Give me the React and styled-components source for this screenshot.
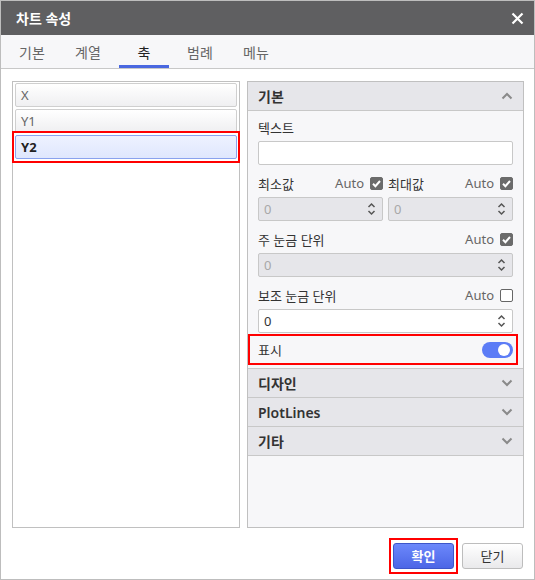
import styled, { createGlobalStyle, css } from "styled-components";

const GlobalStyle = createGlobalStyle`
  * { box-sizing: border-box; }
  body {
    margin: 0;
    background: #fff;
    font-family: "Noto Sans", "Noto Sans CJK KR", sans-serif;
  }
`;

const tabs = ["기본", "계열", "축", "범례", "메뉴"];
const axes = ["X", "Y1", "Y2"];
const sections = ["디자인", "PlotLines", "기타"];

// red annotation frame drawn over an element
const redFrame = (x, y) => css`
  position: relative;
  &::before {
    content: "";
    position: absolute;
    left: -${x}px;
    right: -${x}px;
    top: -${y}px;
    bottom: -${y}px;
    border: 2px solid #f00;
    pointer-events: none;
  }
`;

const Chevron = ({ up }) => (
  <svg width="12" height="8" viewBox="0 0 12 8">
    <path
      d={up ? "M1.5 6.5 L6 2 L10.5 6.5" : "M1.5 1.5 L6 6 L10.5 1.5"}
      fill="none"
      stroke="#8a8a8a"
      strokeWidth="2"
    />
  </svg>
);

const Spinner = () => (
  <svg width="9" height="16" viewBox="0 0 9 16">
    <path d="M1.5 6 L4.5 3 L7.5 6 M1.5 10 L4.5 13 L7.5 10" fill="none" stroke="#555" strokeWidth="1.5" />
  </svg>
);

const Check = ({ checked }) => (
  <Box checked={checked}>
    {checked && (
      <svg width="11" height="11" viewBox="0 0 11 11">
        <path d="M2 5.8 L4.4 8.2 L9 3" fill="none" stroke="#fff" strokeWidth="2" />
      </svg>
    )}
  </Box>
);

const AutoCheck = ({ checked }) => (
  <Auto>
    Auto <Check checked={checked} />
  </Auto>
);

const NumberInput = ({ disabled }) => (
  <Input disabled={disabled}>
    <span>0</span>
    <Spinner />
  </Input>
);

const App = () => {
  return (
    <>
      <GlobalStyle />
      <Dialog>
        <TitleBar>
          <h1>차트 속성</h1>
          <svg width="13" height="13" viewBox="0 0 13 13">
            <path d="M1.5 1.5 L11.5 11.5 M11.5 1.5 L1.5 11.5" stroke="#fff" strokeWidth="2.2" />
          </svg>
        </TitleBar>

        <TabBar>
          {tabs.map((t) => (
            <Tab key={t} active={t === "축"}>
              {t}
            </Tab>
          ))}
        </TabBar>

        <Body>
          <ListPanel>
            {axes.map((a) => (
              <ListItem key={a} selected={a === "Y2"}>
                {a}
              </ListItem>
            ))}
          </ListPanel>

          <PropPanel>
            <SectionHeader first>
              <span>기본</span>
              <Chevron up />
            </SectionHeader>
            <Content>
              <Field>
                <LabelRow>텍스트</LabelRow>
                <TextBox />
              </Field>

              <Field>
                <Pair>
                  <LabelRow>
                    최소값
                    <AutoCheck checked />
                  </LabelRow>
                  <LabelRow>
                    최대값
                    <AutoCheck checked />
                  </LabelRow>
                  <NumberInput disabled />
                  <NumberInput disabled />
                </Pair>
              </Field>

              <Field>
                <LabelRow>
                  주 눈금 단위
                  <AutoCheck checked />
                </LabelRow>
                <NumberInput disabled />
              </Field>

              <Field>
                <LabelRow>
                  보조 눈금 단위
                  <AutoCheck />
                </LabelRow>
                <NumberInput />
              </Field>

              <ToggleRow>
                표시
                <Toggle />
              </ToggleRow>
            </Content>

            {sections.map((s) => (
              <SectionHeader key={s}>
                <span>{s}</span>
                <Chevron />
              </SectionHeader>
            ))}
          </PropPanel>
        </Body>

        <Footer>
          <Button primary>확인</Button>
          <Button>닫기</Button>
        </Footer>
      </Dialog>
    </>
  );
};

export default App;

const Dialog = styled.div`
  width: 535px;
  height: 580px;
  border: 1px solid #bdbdbd;
  display: flex;
  flex-direction: column;
  background: #fff;
`;

const TitleBar = styled.div`
  height: 34px;
  background: #5f5f61;
  display: flex;
  align-items: center;
  justify-content: space-between;
  padding: 0 10px 0 15px;

  h1 {
    margin: 0;
    color: #fff;
    font-size: 14px;
    font-weight: 700;
  }
`;

const TabBar = styled.div`
  height: 34px;
  background: #f7f7f9;
  border-bottom: 1px solid #c8c8c8;
  display: flex;
  padding-left: 3px;
`;

const Tab = styled.div`
  position: relative;
  width: 56px;
  display: flex;
  align-items: center;
  justify-content: center;
  font-size: 14px;
  color: ${(p) => (p.active ? "#222" : "#666")};

  ${(p) =>
    p.active &&
    css`
      &::after {
        content: "";
        position: absolute;
        left: 3px;
        right: 3px;
        bottom: 0;
        height: 3px;
        background: #4a68e0;
      }
    `}
`;

const Body = styled.div`
  flex: 1;
  display: flex;
  gap: 7px;
  padding: 12px 10px 0 11px;
`;

const ListPanel = styled.div`
  width: 228px;
  height: 447px;
  border: 1px solid #c0c0c0;
  background: #fff;
  padding: 1px 2px;
  display: flex;
  flex-direction: column;
  gap: 2px;
`;

const ListItem = styled.div`
  height: 24px;
  border: 1px solid ${(p) => (p.selected ? "#8aa2ee" : "#cfcfcf")};
  border-radius: 2px;
  background: ${(p) =>
    p.selected
      ? "linear-gradient(#eef2ff, #dfe7fd)"
      : "linear-gradient(#ffffff, #efeff1)"};
  display: flex;
  align-items: center;
  padding-left: 5px;
  font-size: 13px;
  color: ${(p) => (p.selected ? "#222" : "#666")};
  font-weight: ${(p) => (p.selected ? 700 : 400)};
  ${(p) => p.selected && redFrame(4, 5)}
`;

const PropPanel = styled.div`
  width: 277px;
  height: 447px;
  border: 1px solid #c0c0c0;
  background: #f7f7f9;
  display: flex;
  flex-direction: column;
`;

const SectionHeader = styled.div`
  height: ${(p) => (p.first ? "29px" : "30px")};
  flex-shrink: 0;
  background: #e6e6ea;
  border-bottom: 1px solid #c8c8c8;
  ${(p) => !p.first && "border-top: 1px solid #c8c8c8; margin-top: -1px;"}
  display: flex;
  align-items: center;
  justify-content: space-between;
  padding: 0 10px 0 10px;
  font-size: 14px;
  font-weight: ${(p) => (p.first ? 700 : 600)};
  color: #333;
`;

const Content = styled.div`
  padding: 4px 10px 6px;
  display: flex;
  flex-direction: column;
  gap: 6px;
`;

const Field = styled.div`
  display: flex;
  flex-direction: column;
  gap: 2px;
`;

const Pair = styled.div`
  display: grid;
  grid-template-columns: 1fr 1fr;
  column-gap: 5px;
  row-gap: 2px;
`;

const LabelRow = styled.div`
  height: 24px;
  display: flex;
  align-items: center;
  justify-content: space-between;
  font-size: 13px;
  color: #333;
`;

const Auto = styled.span`
  display: flex;
  align-items: center;
  gap: 6px;
  color: #666;
  font-size: 13px;
`;

const Box = styled.span`
  width: 13px;
  height: 13px;
  border-radius: 2px;
  display: flex;
  align-items: center;
  justify-content: center;
  background: ${(p) => (p.checked ? "#6b6b6b" : "#fff")};
  border: 1px solid ${(p) => (p.checked ? "#6b6b6b" : "#666")};
`;

const inputBase = css`
  height: 24px;
  border: 1px solid #c8c8c8;
  border-radius: 2px;
`;

const TextBox = styled.div`
  ${inputBase}
  background: #fff;
`;

const Input = styled.div`
  ${inputBase}
  background: ${(p) => (p.disabled ? "#e6e6ea" : "#fff")};
  display: flex;
  align-items: center;
  justify-content: space-between;
  padding: 0 6px 0 5px;
  font-size: 13px;
  color: ${(p) => (p.disabled ? "#a8a8a8" : "#333")};
`;

const ToggleRow = styled.div`
  height: 27px;
  margin: -3px -3px 0 -8px;
  padding: 0 3px 0 8px;
  display: flex;
  align-items: center;
  justify-content: space-between;
  font-size: 13px;
  color: #333;
  ${redFrame(2, 2)}
`;

const Toggle = styled.span`
  position: relative;
  width: 31px;
  height: 16px;
  border-radius: 8px;
  background: #5c7cf6;

  &::after {
    content: "";
    position: absolute;
    right: 3px;
    top: 2px;
    width: 12px;
    height: 12px;
    border-radius: 50%;
    background: #fff;
  }
`;

const Footer = styled.div`
  height: 51px;
  display: flex;
  justify-content: flex-end;
  align-items: center;
  gap: 8px;
  padding: 4px 11px 0 0;
`;

const Button = styled.button`
  width: 61px;
  height: 26px;
  border-radius: 3px;
  font-family: "Noto Sans", "Noto Sans CJK KR", sans-serif;
  font-size: 13px;
  cursor: pointer;
  ${(p) =>
    p.primary
      ? css`
          color: #fff;
          font-weight: 700;
          background: linear-gradient(#6c88fb, #4c66e6);
          border: 1px solid #3d55c9;
          ${redFrame(5, 6)}
        `
      : css`
          color: #333;
          background: linear-gradient(#ffffff, #e9e9eb);
          border: 1px solid #bdbdbd;
        `}
`;
